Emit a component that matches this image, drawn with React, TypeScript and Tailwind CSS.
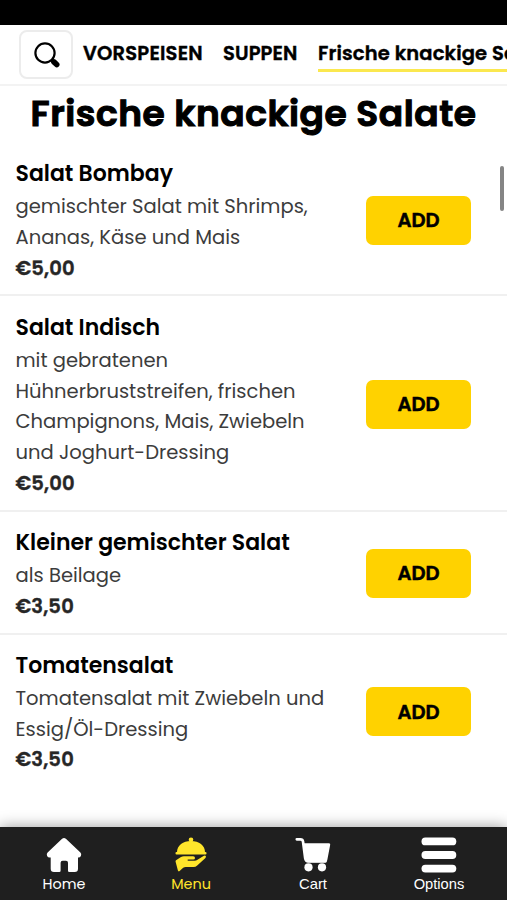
import { useState } from 'react';

const categories = [
  { name: 'VORSPEISEN', width: 'w-[120px] tracking-[0.2px]' },
  { name: 'SUPPEN', width: 'w-[75px] tracking-[0.1px]' },
  { name: 'Frische knackige Salate', width: 'w-[240px] tracking-[0.15px]' },
];

const dishes = [
  {
    title: 'Salat Bombay',
    lines: ['gemischter Salat mit Shrimps,', 'Ananas, Käse und Mais'],
    price: '€5,00',
  },
  {
    title: 'Salat Indisch',
    lines: [
      'mit gebratenen',
      'Hühnerbruststreifen, frischen',
      'Champignons, Mais, Zwiebeln',
      'und Joghurt-Dressing',
    ],
    price: '€5,00',
  },
  {
    title: 'Kleiner gemischter Salat',
    lines: ['als Beilage'],
    price: '€3,50',
  },
  {
    title: 'Tomatensalat',
    lines: ['Tomatensalat mit Zwiebeln und', 'Essig/Öl-Dressing'],
    price: '€3,50',
  },
];

function SearchIcon() {
  return (
    <svg width="26" height="26" viewBox="0 0 26 26" fill="none" stroke="#000">
      <circle cx="11" cy="11" r="9.6" strokeWidth="2.2" />
      <path d="M17.5 17.5l2 2" strokeWidth="2.5" />
      <path d="M19.9 19.9l2.8 2.6" strokeWidth="5.6" strokeLinecap="round" />
    </svg>
  );
}

function HomeIcon() {
  return (
    <svg width="36" height="36" viewBox="0 0 36 36" fill="currentColor">
      <path d="M16.1 1.8Q18 .1 19.900 1.8L34.400 15.600Q35.800 17.100 34.900 18.900Q34.100 20.400 32.200 20.400H32V31.700Q32 35 28.700 35H23.300Q22 35 22 33.700V25.800Q22 23.800 20 23.800H16.600Q14.600 23.800 14.600 25.800V33.700Q14.600 35 13.300 35H8Q4.700 35 4.700 31.700V20.400H3.800Q1.900 20.400 1.100 18.900Q.2 17.100 1.600 15.600Z" />
    </svg>
  );
}

function MenuIcon() {
  return (
    <svg width="32" height="36" viewBox="0 0 32 36" fill="currentColor">
      <circle cx="16" cy="2.700" r="2.300" />
      <path d="M2 15.300C2 8.500 8 4.100 16 4.100S30 8.500 30 15.300Z" />
      <rect x=".5" y="15" width="31" height="2.600" rx="1" />
      <path d="M1 23.200L6 20.100Q7.300 19.300 9 19.300H18.200Q20 19.300 20 20.900Q20 22.500 18.200 22.500H12.700V23.700H19.600Q21.200 23.700 22.500 22.800L28.500 19Q30.100 18.200 30.800 19.100Q31.400 20.100 30.200 21.200L22.200 28.400Q20.600 29.900 18.500 29.900H10.800Q9.300 29.900 8.200 30.800L4.600 34.100Q3.500 34.900 2.900 33.600L.6 24.700Q.3 23.700 1 23.200Z" />
    </svg>
  );
}

function CartIcon() {
  return (
    <svg width="36" height="36" viewBox="0 0 36 36" fill="currentColor">
      <path
        d="M1.800 2.300H5.500Q7.600 2.300 8 4.400L10.200 21.200Q10.700 24.300 13.600 24.300H30.500"
        fill="none"
        stroke="currentColor"
        strokeWidth="2.700"
        strokeLinecap="round"
      />
      <path d="M7.800 6.200H34Q35.500 6.200 35.200 7.800L32.400 22.400Q31.900 25.200 29.400 25.200H13.100Q10.500 25.200 10.100 22.400Z" />
      <circle cx="13.500" cy="30.300" r="4.100" />
      <circle cx="27" cy="30.300" r="4.100" />
    </svg>
  );
}

function OptionsIcon() {
  return (
    <svg width="36" height="36" viewBox="0 0 36 36" fill="currentColor">
      <rect x=".5" y=".5" width="34.800" height="7.800" rx="3.900" />
      <rect x=".5" y="14.100" width="34.800" height="7.800" rx="3.900" />
      <rect x=".5" y="27.700" width="34.800" height="7.800" rx="3.900" />
    </svg>
  );
}

const tabs = [
  { label: 'Home', icon: HomeIcon, font: "text-[14.4px] font-['Poppins','Inter',sans-serif]" },
  { label: 'Menu', icon: MenuIcon, font: "text-[14.4px] font-['Poppins','Inter',sans-serif]" },
  { label: 'Cart', icon: CartIcon, font: "text-[14.8px] font-['Liberation_Sans',sans-serif]" },
  { label: 'Options', icon: OptionsIcon, font: "text-[14.7px] font-['Liberation_Sans',sans-serif]" },
];

export default function App() {
  const [activeTab, setActiveTab] = useState('Menu');
  const [activeCategory, setActiveCategory] = useState('Frische knackige Salate');

  return (
    <div className="flex h-[900px] w-[507px] flex-col overflow-hidden bg-white font-['Poppins','Inter',sans-serif] text-black">
      <div className="h-[25px] shrink-0 bg-black" />
      <nav className="flex h-[61px] shrink-0 overflow-hidden border-b-2 border-[#f3f3f3] pt-[5px] pl-[19px]">
        <button className="flex h-[49px] w-[54px] shrink-0 items-center justify-center rounded-lg border-2 border-[#ececec] pl-0.5">
          <SearchIcon />
        </button>
        <div className="ml-[10px] flex gap-5">
          {categories.map((category) => (
            <button
              key={category.name}
              className={`mt-[5px] flex h-[37px] shrink-0 items-center border-b-3 pt-[3px] text-left text-[19.5px] font-semibold whitespace-nowrap [-webkit-text-stroke:0.4px] ${category.width} ${
                category.name === activeCategory ? 'border-[#fbe84f]' : 'border-transparent'
              }`}
              onClick={() => setActiveCategory(category.name)}
            >
              {category.name}
            </button>
          ))}
        </div>
      </nav>

      <main className="relative min-h-0 flex-1 overflow-hidden">
        <h1 className="flex h-[56.800px] items-center justify-center text-[36px] font-semibold tracking-[0.540px] whitespace-nowrap [-webkit-text-stroke:1.1px]">
          Frische knackige Salate
        </h1>
        {dishes.map((dish) => (
          <section
            key={dish.title}
            className="flex items-center justify-between border-b-2 border-[#f0f0f0] pt-[13.400px] pb-[11.200px] pr-9 pl-[15.500px] last-of-type:border-transparent"
          >
            <div className="whitespace-nowrap">
              <h2 className="text-[22px] leading-[35px] font-semibold">{dish.title}</h2>
              <div className="text-[19.550px] leading-[30.700px] text-[#3c3c3c]">
                {dish.lines.map((line) => (
                  <p key={line}>{line}</p>
                ))}
              </div>
              <p className="text-[19.550px] leading-[30.300px] font-semibold tracking-[0.2px] text-[#262626] [-webkit-text-stroke:0.4px] mb-[0.400px]">
                {dish.price}
              </p>
            </div>
            <button className="mt-[0.600px] h-[49px] w-[105px] rounded-[7px] bg-[#ffd200] pt-[1px] text-[19.550px] font-semibold [-webkit-text-stroke:0.5px]">
              ADD
            </button>
          </section>
        ))}
        {/* scroll indicator */}
        <div className="absolute top-[80px] right-[3px] h-[45px] w-[4px] rounded-full bg-[#858585]" />
      </main>

      <footer className="relative grid h-[73px] shrink-0 grid-cols-[128px_126px_118px_134px] bg-[#1f1f1f] shadow-[0_0_14px_rgba(0,0,0,0.4)]">
        {tabs.map(({ label, icon: Icon, font }) => (
          <button
            key={label}
            className={`flex flex-col items-center pt-[10px] ${
              activeTab === label ? 'text-[#ffe52b]' : 'text-white'
            }`}
            onClick={() => setActiveTab(label)}
          >
            <Icon />
            <span className={`mt-[1px] leading-[20px] ${font}`}>{label}</span>
          </button>
        ))}
      </footer>
    </div>
  );
}
